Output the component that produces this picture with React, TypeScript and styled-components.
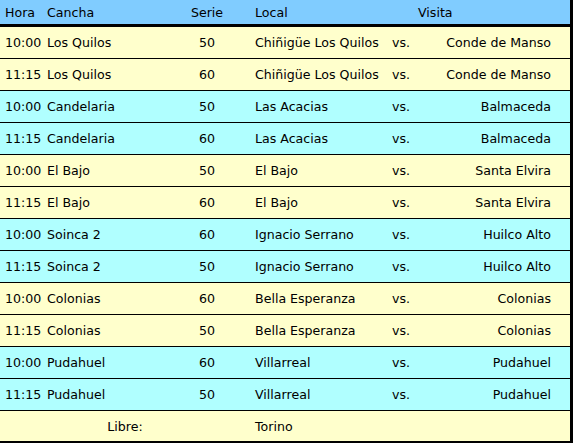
import React from "react";
import styled, { createGlobalStyle } from "styled-components";

const Global = createGlobalStyle`
  html, body { margin: 0; padding: 0; background: #ffffff; }
  body { font-family: "DejaVu Sans", Verdana, sans-serif; }
`;

const Table = styled.div`
  width: 573px;
  box-sizing: border-box;
  border-right: 3px solid #000;
  border-bottom: 3px solid #000;
  font-size: 12.6px;
  color: #000;
`;

const cols = "42px 130px 70px 128px 62px 138px";

const HeaderRow = styled.div`
  display: grid;
  grid-template-columns: ${cols};
  height: 24px;
  align-items: center;
  background: #80ccff;
  border-bottom: 3px solid #000;
`;

const Row = styled.div<{ $tone: "yellow" | "cyan"; $last?: boolean }>`
  display: grid;
  grid-template-columns: ${cols};
  height: ${(p) => (p.$last ? "30px" : "31px")};
  align-items: center;
  background: ${(p) => (p.$tone === "yellow" ? "#ffffcc" : "#b0ffff")};
  border-bottom: ${(p) => (p.$last ? "none" : "1px solid #000")};
`;

const Cell = styled.div<{ $align?: "left" | "center" | "right"; $pl?: number; $pr?: number; $span?: number }>`
  text-align: ${(p) => p.$align ?? "left"};
  padding-left: ${(p) => p.$pl ?? 0}px;
  padding-right: ${(p) => p.$pr ?? 0}px;
  grid-column: ${(p) => (p.$span ? `span ${p.$span}` : "auto")};
  white-space: nowrap;
`;

type Match = { hora: string; cancha: string; serie: string; local: string; visita: string };

const matches: Match[] = [
  { hora: "10:00", cancha: "Los Quilos", serie: "50", local: "Chiñigüe Los Quilos", visita: "Conde de Manso" },
  { hora: "11:15", cancha: "Los Quilos", serie: "60", local: "Chiñigüe Los Quilos", visita: "Conde de Manso" },
  { hora: "10:00", cancha: "Candelaria", serie: "50", local: "Las Acacias", visita: "Balmaceda" },
  { hora: "11:15", cancha: "Candelaria", serie: "60", local: "Las Acacias", visita: "Balmaceda" },
  { hora: "10:00", cancha: "El Bajo", serie: "50", local: "El Bajo", visita: "Santa Elvira" },
  { hora: "11:15", cancha: "El Bajo", serie: "60", local: "El Bajo", visita: "Santa Elvira" },
  { hora: "10:00", cancha: "Soinca 2", serie: "60", local: "Ignacio Serrano", visita: "Huilco Alto" },
  { hora: "11:15", cancha: "Soinca 2", serie: "50", local: "Ignacio Serrano", visita: "Huilco Alto" },
  { hora: "10:00", cancha: "Colonias", serie: "60", local: "Bella Esperanza", visita: "Colonias" },
  { hora: "11:15", cancha: "Colonias", serie: "50", local: "Bella Esperanza", visita: "Colonias" },
  { hora: "10:00", cancha: "Pudahuel", serie: "60", local: "Villarreal", visita: "Pudahuel" },
  { hora: "11:15", cancha: "Pudahuel", serie: "50", local: "Villarreal", visita: "Pudahuel" },
];

export default function App() {
  return (
    <>
      <Global />
      <Table>
        <HeaderRow>
          <Cell $pl={5}>Hora</Cell>
          <Cell $pl={5}>Cancha</Cell>
          <Cell $align="center">Serie</Cell>
          <Cell $pl={13}>Local</Cell>
          <Cell $span={2} $pl={48}>Visita</Cell>
        </HeaderRow>
        {matches.map((m, i) => (
          <Row key={i} $tone={Math.floor(i / 2) % 2 === 0 ? "yellow" : "cyan"}>
            <Cell $pl={5}>{m.hora}</Cell>
            <Cell $pl={5}>{m.cancha}</Cell>
            <Cell $align="center">{m.serie}</Cell>
            <Cell $pl={13}>{m.local}</Cell>
            <Cell $align="center">vs.</Cell>
            <Cell $align="right" $pr={19}>{m.visita}</Cell>
          </Row>
        ))}
        <Row $tone="yellow" $last>
          <Cell $span={3} $align="center" $pl={8}>Libre:</Cell>
          <Cell $pl={13}>Torino</Cell>
        </Row>
      </Table>
    </>
  );
}
